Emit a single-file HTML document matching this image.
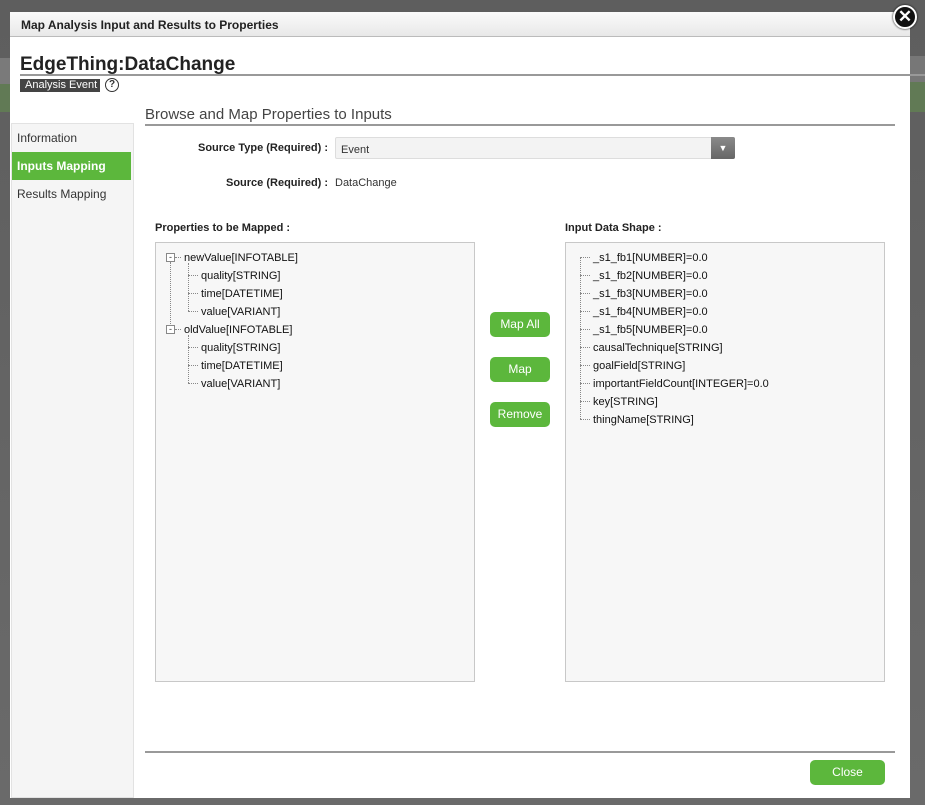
<!DOCTYPE html>
<html><head><meta charset="utf-8"><style>
*{margin:0;padding:0;box-sizing:border-box}
body{width:925px;height:805px;overflow:hidden;background:linear-gradient(#5e5e5e,#6a6a6a);font-family:"Liberation Sans",Arial,sans-serif;position:relative}
.a{position:absolute}
.t{font-size:11px;color:#111;position:absolute;white-space:nowrap;line-height:14px}
.btn{position:absolute;background:#5cb73c;color:#fff;border-radius:5px;font-size:12px;text-align:center;line-height:25px}
.hd{position:absolute;border-left:1px dotted #888}
.hh{position:absolute;border-top:1px dotted #888;height:0}
</style></head><body>
<div class="a" style="left:0;top:58px;width:10px;height:28px;background:#7a7a7a"></div>
<div class="a" style="left:0;top:84px;width:10px;height:28px;background:#617a55"></div>
<div class="a" style="left:910px;top:56px;width:15px;height:26px;background:#777"></div>
<div class="a" style="left:910px;top:82px;width:15px;height:30px;background:#617a55"></div>
<div class="a" style="left:10px;top:12px;width:900px;height:786px;background:#fff"></div>
<div class="a" style="left:10px;top:12px;width:900px;height:25px;background:linear-gradient(#fbfbfb,#e8e8e8);border-bottom:1px solid #bbb"></div>
<div class="a" style="left:21px;top:18px;font-size:12px;font-weight:bold;color:#222">Map Analysis Input and Results to Properties</div>
<div class="a" style="left:893px;top:5px;width:24px;height:24px;border-radius:50%;background:#111;border:2px solid #fff;box-shadow:0 0 2px #000;color:#fff;font-size:17px;font-weight:bold;text-align:center;line-height:19px">✕</div>
<div class="a" style="left:20px;top:54px;font-size:19px;font-weight:bold;color:#222">EdgeThing:DataChange</div>
<div class="a" style="left:20px;top:74px;width:905px;height:2px;background:#999"></div>
<div class="a" style="left:20px;top:79px;width:80px;height:13px;background:#444;color:#fff;font-size:11px;line-height:13px;padding-left:5px">Analysis Event</div>
<div class="a" style="left:105px;top:78px;width:14px;height:14px;border:1.5px solid #333;border-radius:50%;font-size:10px;text-align:center;line-height:11px;color:#333;font-weight:bold">?</div>
<div class="a" style="left:145px;top:106px;font-size:15px;color:#444">Browse and Map Properties to Inputs</div>
<div class="a" style="left:145px;top:124px;width:750px;height:2px;background:#999"></div>
<div class="a" style="left:11px;top:123px;width:123px;height:675px;background:#f5f5f5;border:1px solid #e2e2e2"></div>
<div class="a" style="left:17px;top:131px;font-size:12px;color:#333">Information</div>
<div class="a" style="left:12px;top:152px;width:119px;height:28px;background:#5cb73c"></div>
<div class="a" style="left:17px;top:159px;font-size:12px;font-weight:bold;color:#fff">Inputs Mapping</div>
<div class="a" style="left:17px;top:187px;font-size:12px;color:#333">Results Mapping</div>
<div class="a" style="left:198px;top:142px;font-size:11px;font-weight:bold;color:#222">Source Type (Required) :</div>
<div class="a" style="left:335px;top:137px;width:400px;height:22px;background:#f3f3f3;border:1px solid #ddd;border-radius:2px"></div>
<div class="a" style="left:341px;top:144px;font-size:11px;color:#333">Event</div>
<div class="a" style="left:711px;top:137px;width:24px;height:22px;background:linear-gradient(#8a8a8a,#666);border-radius:0 2px 2px 0;color:#fff;font-size:9px;text-align:center;line-height:22px">▼</div>
<div class="a" style="left:226px;top:177px;font-size:11px;font-weight:bold;color:#222">Source (Required) :</div>
<div class="a" style="left:335px;top:177px;font-size:11px;color:#333">DataChange</div>
<div class="a" style="left:155px;top:222px;font-size:11px;font-weight:bold;color:#222">Properties to be Mapped :</div>
<div class="a" style="left:565px;top:222px;font-size:11px;font-weight:bold;color:#222">Input Data Shape :</div>
<div class="a" style="left:155px;top:242px;width:320px;height:440px;background:#f7f7f7;border:1px solid #c8c8c8"></div>
<div class="a" style="left:565px;top:242px;width:320px;height:440px;background:#f7f7f7;border:1px solid #c8c8c8"></div>
<div class="hd" style="left:170px;top:262px;height:62px"></div>
<div class="a" style="left:166px;top:253px;width:9px;height:9px;border:1px solid #888;background:#fff;font-size:9px;line-height:6px;text-align:center;color:#333">-</div>
<div class="hh" style="left:175px;top:257px;width:6px"></div>
<div class="t" style="left:184px;top:251px">newValue[INFOTABLE]</div>
<div class="hd" style="left:188px;top:263px;height:48px"></div>
<div class="hh" style="left:188px;top:275px;width:10px"></div>
<div class="hh" style="left:188px;top:293px;width:10px"></div>
<div class="hh" style="left:188px;top:311px;width:10px"></div>
<div class="t" style="left:201px;top:269px">quality[STRING]</div>
<div class="t" style="left:201px;top:287px">time[DATETIME]</div>
<div class="t" style="left:201px;top:305px">value[VARIANT]</div>
<div class="a" style="left:166px;top:325px;width:9px;height:9px;border:1px solid #888;background:#fff;font-size:9px;line-height:6px;text-align:center;color:#333">-</div>
<div class="hh" style="left:175px;top:329px;width:6px"></div>
<div class="t" style="left:184px;top:323px">oldValue[INFOTABLE]</div>
<div class="hd" style="left:188px;top:335px;height:48px"></div>
<div class="hh" style="left:188px;top:347px;width:10px"></div>
<div class="hh" style="left:188px;top:365px;width:10px"></div>
<div class="hh" style="left:188px;top:383px;width:10px"></div>
<div class="t" style="left:201px;top:341px">quality[STRING]</div>
<div class="t" style="left:201px;top:359px">time[DATETIME]</div>
<div class="t" style="left:201px;top:377px">value[VARIANT]</div>
<div class="hd" style="left:580px;top:257px;height:162px"></div>
<div class="hh" style="left:580px;top:257px;width:10px"></div>
<div class="hh" style="left:580px;top:275px;width:10px"></div>
<div class="hh" style="left:580px;top:293px;width:10px"></div>
<div class="hh" style="left:580px;top:311px;width:10px"></div>
<div class="hh" style="left:580px;top:329px;width:10px"></div>
<div class="hh" style="left:580px;top:347px;width:10px"></div>
<div class="hh" style="left:580px;top:365px;width:10px"></div>
<div class="hh" style="left:580px;top:383px;width:10px"></div>
<div class="hh" style="left:580px;top:401px;width:10px"></div>
<div class="hh" style="left:580px;top:419px;width:10px"></div>
<div class="t" style="left:593px;top:251px">_s1_fb1[NUMBER]=0.0</div>
<div class="t" style="left:593px;top:269px">_s1_fb2[NUMBER]=0.0</div>
<div class="t" style="left:593px;top:287px">_s1_fb3[NUMBER]=0.0</div>
<div class="t" style="left:593px;top:305px">_s1_fb4[NUMBER]=0.0</div>
<div class="t" style="left:593px;top:323px">_s1_fb5[NUMBER]=0.0</div>
<div class="t" style="left:593px;top:341px">causalTechnique[STRING]</div>
<div class="t" style="left:593px;top:359px">goalField[STRING]</div>
<div class="t" style="left:593px;top:377px">importantFieldCount[INTEGER]=0.0</div>
<div class="t" style="left:593px;top:395px">key[STRING]</div>
<div class="t" style="left:593px;top:413px">thingName[STRING]</div>
<div class="btn" style="left:490px;top:312px;width:60px">Map All</div>
<div class="btn" style="left:490px;top:357px;width:60px">Map</div>
<div class="btn" style="left:490px;top:402px;width:60px">Remove</div>
<div class="a" style="left:145px;top:751px;width:750px;height:2px;background:#999"></div>
<div class="btn" style="left:810px;top:760px;width:75px">Close</div>
</body></html>
